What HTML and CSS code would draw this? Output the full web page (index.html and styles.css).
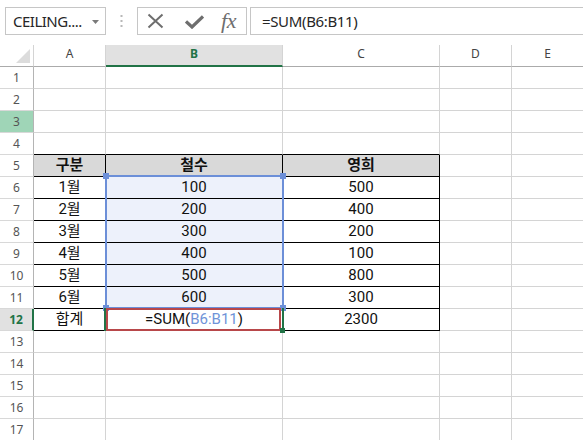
FILE: index.html
```html
<!DOCTYPE html>
<html lang="ko">
<head>
<meta charset="utf-8">
<link rel="stylesheet" href="styles.css">
</head>
<body>
<div class="app">
  <div class="toolbar">
    <div class="namebox">
      <span class="name">CEILING....</span>
      <svg class="caret" width="7" height="4" viewBox="0 0 7 4"><path d="M0 0H7L3.5 4Z" fill="#7a7a7a"/></svg>
    </div>
    <div class="dots">
      <svg width="3" height="12" viewBox="0 0 3 12"><rect x="0.5" y="0" width="2" height="2" fill="#b8b8b8"/><rect x="0.5" y="5" width="2" height="2" fill="#b8b8b8"/><rect x="0.5" y="10" width="2" height="2" fill="#b8b8b8"/></svg>
    </div>
    <div class="btns">
      <svg class="ico-x" width="17" height="16" viewBox="0 0 17 16"><path d="M1.5 1.5L15.5 14.5M15.5 1.5L1.5 14.5" stroke="#6e6e6e" stroke-width="2" fill="none"/></svg>
      <svg class="ico-ok" width="19" height="14" viewBox="0 0 19 14"><path d="M1 6.5L7 12L18 1.5" stroke="#6e6e6e" stroke-width="3.2" fill="none"/></svg>
      <span class="fx">fx</span>
    </div>
    <div class="formula">=SUM(B6:B11)</div>
  </div>

  <div class="sheet">
    <div class="row hdr">
      <div class="corner"><svg width="14" height="14" viewBox="0 0 14 14"><path d="M14 0V14H0Z" fill="#dcdcdc"/></svg></div>
      <div class="ch">A</div>
      <div class="ch chsel">B</div>
      <div class="ch">C</div>
      <div class="ch">D</div>
      <div class="ch">E</div>
    </div>
    <div class="row"><div class="rh">1</div><div class="c"></div><div class="c"></div><div class="c"></div><div class="c"></div><div class="c"></div></div>
    <div class="row"><div class="rh">2</div><div class="c"></div><div class="c"></div><div class="c"></div><div class="c"></div><div class="c"></div></div>
    <div class="row"><div class="rh rh-hl">3</div><div class="c"></div><div class="c"></div><div class="c"></div><div class="c"></div><div class="c"></div></div>
    <div class="row"><div class="rh">4</div><div class="c top"></div><div class="c top"></div><div class="c top"></div><div class="c"></div><div class="c"></div></div>
    <div class="row"><div class="rh">5</div><div class="c t th">구분</div><div class="c t th">철수</div><div class="c t th">영희</div><div class="c"></div><div class="c"></div></div>
    <div class="row"><div class="rh">6</div><div class="c t">1월</div><div class="c t sel">100</div><div class="c t">500</div><div class="c"></div><div class="c"></div></div>
    <div class="row"><div class="rh">7</div><div class="c t">2월</div><div class="c t sel">200</div><div class="c t">400</div><div class="c"></div><div class="c"></div></div>
    <div class="row"><div class="rh">8</div><div class="c t">3월</div><div class="c t sel">300</div><div class="c t">200</div><div class="c"></div><div class="c"></div></div>
    <div class="row"><div class="rh">9</div><div class="c t">4월</div><div class="c t sel">400</div><div class="c t">100</div><div class="c"></div><div class="c"></div></div>
    <div class="row"><div class="rh">10</div><div class="c t">5월</div><div class="c t sel">500</div><div class="c t">800</div><div class="c"></div><div class="c"></div></div>
    <div class="row"><div class="rh">11</div><div class="c t">6월</div><div class="c t sel">600</div><div class="c t">300</div><div class="c"></div><div class="c"></div></div>
    <div class="row"><div class="rh rh-act">12</div><div class="c t">합계</div><div class="c t">=SUM(<span class="ref">B6:B11</span>)</div><div class="c t">2300</div><div class="c"></div><div class="c"></div></div>
    <div class="row"><div class="rh">13</div><div class="c"></div><div class="c"></div><div class="c"></div><div class="c"></div><div class="c"></div></div>
    <div class="row"><div class="rh">14</div><div class="c"></div><div class="c"></div><div class="c"></div><div class="c"></div><div class="c"></div></div>
    <div class="row"><div class="rh">15</div><div class="c"></div><div class="c"></div><div class="c"></div><div class="c"></div><div class="c"></div></div>
    <div class="row"><div class="rh">16</div><div class="c"></div><div class="c"></div><div class="c"></div><div class="c"></div><div class="c"></div></div>
    <div class="row"><div class="rh">17</div><div class="c"></div><div class="c"></div><div class="c"></div><div class="c"></div><div class="c"></div></div>
  </div>

  <div class="range-box"></div>
  <div class="handle h-tl"></div>
  <div class="handle h-tr"></div>
  <div class="handle h-bl"></div>
  <div class="handle h-br"></div>
  <div class="active-box"></div>
  <div class="edit-box"></div>
  <div class="fill-handle"></div>
</div>
</body>
</html>
```

FILE: styles.css
```css
* { box-sizing: border-box; }
html, body { margin: 0; padding: 0; background: #fff; }
body { width: 583px; height: 440px; overflow: hidden; }

.app {
  position: relative;
  width: 583px;
  height: 440px;
  overflow: hidden;
  font-family: "Noto Sans", sans-serif;
}

/* toolbar */
.toolbar {
  display: flex;
  align-items: flex-start;
  height: 45px;
  padding: 7px 0 0 5px;
}
.namebox {
  width: 101px;
  height: 28px;
  border: 1px solid #c6c6c6;
  display: flex;
  align-items: center;
  justify-content: space-between;
  padding: 0 6px 0 7px;
}
.name {
  font-size: 15px;
  letter-spacing: -0.5px;
  color: #262626;
  line-height: 26px;
}
.caret { margin-top: 1px; }
.dots {
  width: 31px;
  height: 28px;
  display: flex;
  align-items: center;
  justify-content: center;
}
.btns {
  width: 110px;
  height: 28px;
  border: 1px solid #c6c6c6;
  display: flex;
  align-items: center;
  padding-left: 9px;
}
.ico-ok { margin-left: 21px; margin-top: 1px; }
.fx {
  margin-left: 17px;
  font-family: "Liberation Serif", serif;
  font-style: italic;
  font-size: 22px;
  color: #6e6e6e;
  line-height: 24px;
  letter-spacing: -0.3px;
}
.formula {
  flex: 1;
  height: 28px;
  margin-left: 3px;
  border: 1px solid #c6c6c6;
  border-right: none;
  padding-left: 11px;
  font-size: 15px;
  letter-spacing: -0.35px;
  line-height: 26px;
  color: #262626;
}

/* sheet */
.sheet { display: flex; flex-direction: column; }
.row {
  display: grid;
  grid-template-columns: 34px 72px 177px 157px 72px 72px;
  height: 22px;
}
.row > div { height: 22px; }

.corner {
  border-right: 1px solid #d4d4d4;
  border-bottom: 1px solid #ababab;
  display: flex;
  align-items: flex-end;
  justify-content: flex-end;
  padding: 0 3px 3px 0;
}
.ch {
  border-right: 1px solid #d4d4d4;
  border-bottom: 1px solid #ababab;
  text-align: center;
  font-size: 12px;
  line-height: 18px;
  color: #444;
}
.chsel {
  background: #e1e1e1;
  border-bottom: 2px solid #217346;
  color: #217346;
  font-weight: 700;
}
.rh {
  border-right: 1px solid #b4b4b4;
  border-bottom: 1px solid #d8d8d8;
  text-align: center;
  font-size: 12px;
  line-height: 22px;
  color: #555;
}
.rh-hl { background: #9fd5b7; }
.rh-act {
  background: #e1e1e1;
  color: #217346;
  font-weight: 700;
  border-right: 2px solid #217346;
}

.c {
  border-right: 1px solid #d4d4d4;
  border-bottom: 1px solid #d4d4d4;
  text-align: center;
  font-family: Roboto, "Noto Sans CJK KR", sans-serif;
  font-size: 15px;
  line-height: 21px;
  color: #111;
  white-space: nowrap;
}
.c.top { border-bottom-color: #000; }
.c.t { border-right-color: #000; border-bottom-color: #000; }
.c.th { background: #d9d9d9; font-weight: 700; }
.c.sel { background: #edf1fb; }
.ref { color: #6f93d8; }

/* overlays on top of the grid */
.range-box {
  position: absolute;
  left: 105px;
  top: 175px;
  width: 179px;
  height: 134px;
  border: 2px solid #6c8fd8;
}
.handle {
  position: absolute;
  width: 6px;
  height: 6px;
  background: #6c8fd8;
}
.h-tl { left: 103px; top: 173px; }
.h-tr { left: 280px; top: 173px; }
.h-bl { left: 103px; top: 305px; }
.h-br { left: 280px; top: 305px; }
.active-box {
  position: absolute;
  left: 104px;
  top: 308px;
  width: 180px;
  height: 23px;
  border-left: 2px solid #217346;
  border-right: 2px solid #217346;
}
.edit-box {
  position: absolute;
  left: 106px;
  top: 308px;
  width: 175px;
  height: 23px;
  border: 2px solid #b8474a;
}
.fill-handle {
  position: absolute;
  left: 280px;
  top: 328px;
  width: 5px;
  height: 5px;
  background: #217346;
}
```
